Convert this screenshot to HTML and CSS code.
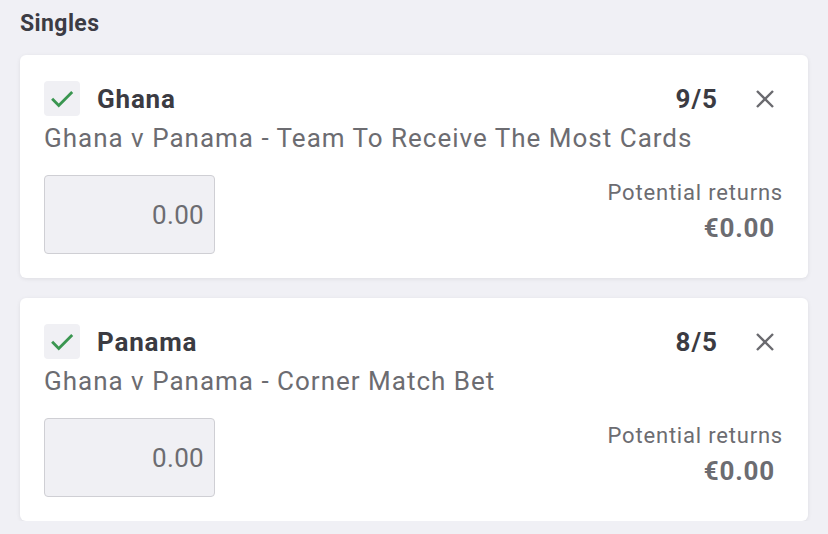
FILE: index.html
```html
<!DOCTYPE html>
<html>
<head>
<meta charset="utf-8">
<link rel="stylesheet" href="styles.css">
</head>
<body>
<div class="page">
  <h2 class="section-title">Singles</h2>
  <div class="card">
    <div class="head">
      <div class="check"><svg viewBox="0 0 24 24" width="26" height="26"><path d="M3.8 12.8l5.2 5.2L20.5 6.5" fill="none" stroke="#3a9650" stroke-width="2.6" stroke-linecap="square"/></svg></div>
      <div class="name">Ghana</div>
      <div class="odds">9/5</div>
      <div class="close"><svg viewBox="0 0 20 20" width="20" height="20"><path d="M2 2L18 18M18 2L2 18" stroke="#6a6a6f" stroke-width="2.4" fill="none"/></svg></div>
    </div>
    <div class="market">Ghana v Panama - Team To Receive The Most Cards</div>
    <div class="foot">
      <div class="stake">0.00</div>
      <div class="returns">
        <div class="returns-label">Potential returns</div>
        <div class="returns-value">€0.00</div>
      </div>
    </div>
  </div>
  <div class="card">
    <div class="head">
      <div class="check"><svg viewBox="0 0 24 24" width="26" height="26"><path d="M3.8 12.8l5.2 5.2L20.5 6.5" fill="none" stroke="#3a9650" stroke-width="2.6" stroke-linecap="square"/></svg></div>
      <div class="name">Panama</div>
      <div class="odds">8/5</div>
      <div class="close"><svg viewBox="0 0 20 20" width="20" height="20"><path d="M2 2L18 18M18 2L2 18" stroke="#6a6a6f" stroke-width="2.4" fill="none"/></svg></div>
    </div>
    <div class="market">Ghana v Panama - Corner Match Bet</div>
    <div class="foot">
      <div class="stake">0.00</div>
      <div class="returns">
        <div class="returns-label">Potential returns</div>
        <div class="returns-value">€0.00</div>
      </div>
    </div>
  </div>
</div>
</body>
</html>
```

FILE: styles.css
```css
html, body {
  margin: 0;
  padding: 0;
  background: #f0f0f5;
  font-family: Roboto, "Liberation Sans", sans-serif;
}
.page {
  padding: 9px 20px 0 20px;
  display: flex;
  flex-direction: column;
  gap: 20px;
}
.section-title {
  margin: 0 0 -4px 0;
  font-size: 23px;
  font-weight: 700;
  color: #3c3c44;
  line-height: 30px;
  letter-spacing: 0.4px;
}
.card {
  background: #ffffff;
  border-radius: 6px;
  box-shadow: 0 1px 4px rgba(0,0,0,0.08);
  padding: 26px 25px 24px 24px;
  display: flex;
  flex-direction: column;
}
.head {
  display: flex;
  align-items: center;
  height: 35px;
}
.check {
  width: 36px;
  height: 35px;
  background: #f0f0f4;
  border-radius: 4px;
  display: flex;
  align-items: center;
  justify-content: center;
}
.name {
  margin-left: 17px;
  font-size: 26px;
  font-weight: 700;
  color: #3b3b42;
  letter-spacing: 0.8px;
  flex: 1;
}
.odds {
  font-size: 26px;
  font-weight: 700;
  color: #3b3b42;
  letter-spacing: 1px;
}
.close {
  width: 20px;
  height: 20px;
  margin-left: 37px;
  margin-right: 8px;
  display: flex;
}
.market {
  font-size: 26px;
  color: #6c6c71;
  line-height: 30px;
  letter-spacing: 1px;
  margin-top: 7px;
}
.foot {
  display: flex;
  justify-content: space-between;
  align-items: flex-start;
  margin-top: 22px;
}
.stake {
  box-sizing: border-box;
  width: 171px;
  height: 79px;
  background: #f0f0f4;
  border: 1.5px solid #cfcfd4;
  border-radius: 4px;
  font-size: 26px;
  letter-spacing: 0.3px;
  color: #6c6c71;
  display: flex;
  align-items: center;
  justify-content: flex-end;
  padding-right: 10px;
}
.returns {
  display: flex;
  flex-direction: column;
  align-items: flex-end;
}
.returns-label {
  font-size: 22px;
  color: #6c6c71;
  line-height: 28px;
  letter-spacing: 0.8px;
  margin-top: 3.5px;
}
.returns-value {
  font-size: 26px;
  font-weight: 700;
  color: #6c6c71;
  letter-spacing: 0.8px;
  margin-right: 8px;
  line-height: 32px;
  margin-top: 5.5px;
}
```
